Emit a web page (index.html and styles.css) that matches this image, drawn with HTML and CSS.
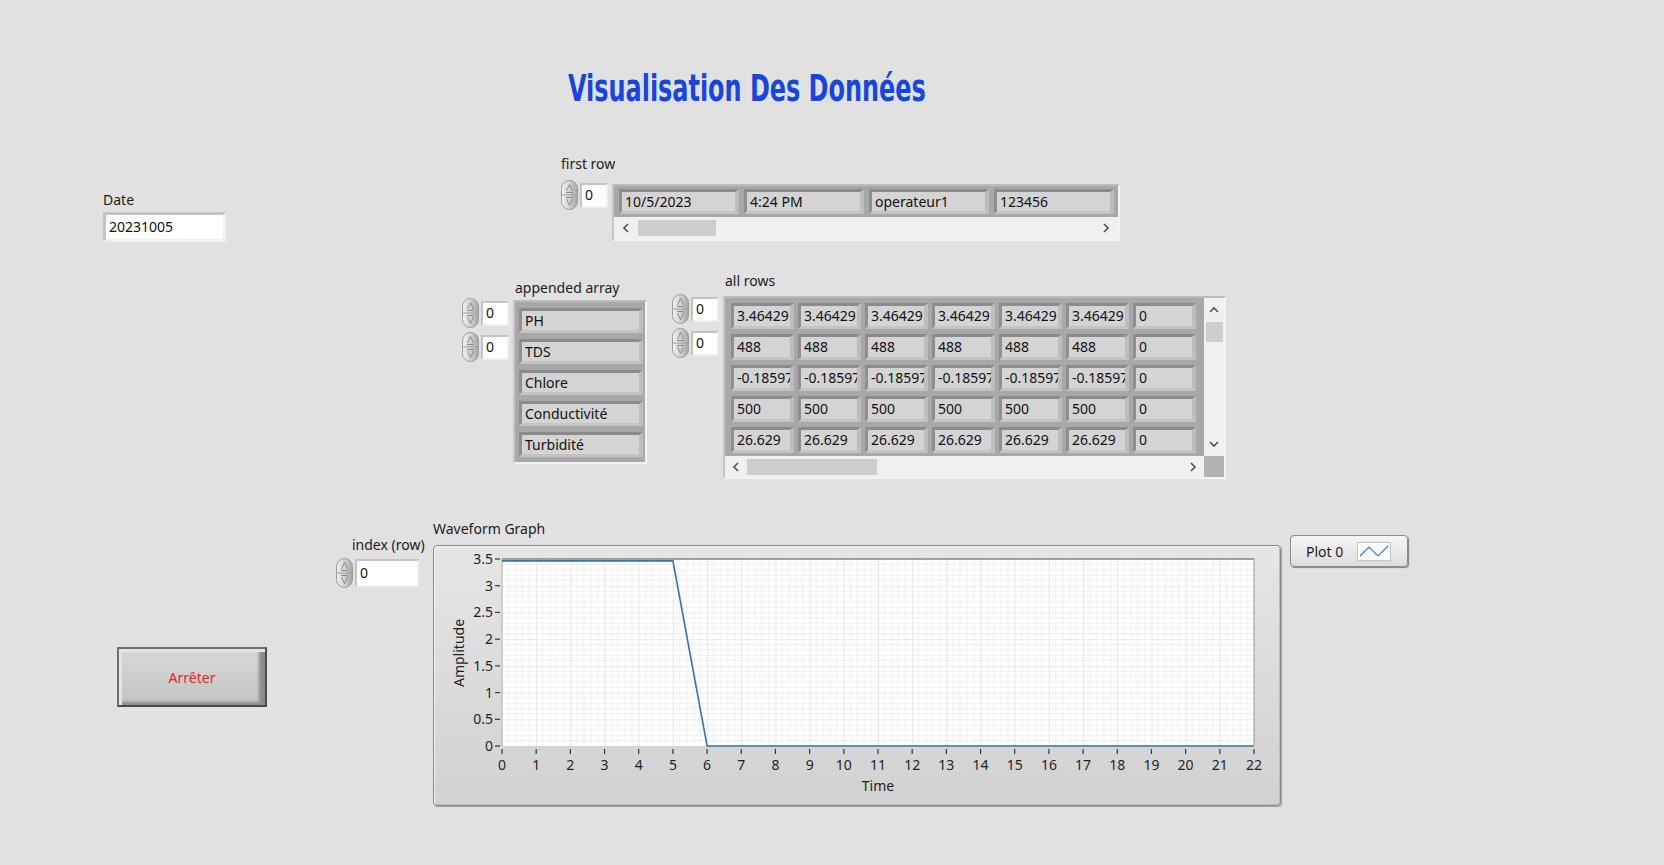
FILE: index.html
```html
<!DOCTYPE html>
<html lang="fr">
<head>
<meta charset="utf-8">
<title>Visualisation Des Données</title>
<link rel="stylesheet" href="styles.css">
</head>
<body>
<div class="panel">
  <h1 class="title"><span>Visualisation Des Données</span></h1>

  <!-- Date -->
  <div class="lbl lbl-date">Date</div>
  <div class="num date-box">20231005</div>

  <!-- first row -->
  <div class="lbl lbl-first">first row</div>
  <div class="idx idx-first">
    <svg class="spin" width="17" height="30" viewBox="0 0 17 30"><defs><linearGradient id="sg" x1="0" x2="1"><stop offset="0" stop-color="#f2f2f2"/><stop offset="0.5" stop-color="#d2d2d2"/><stop offset="1" stop-color="#a4a4a4"/></linearGradient></defs><rect x="0.5" y="0.5" width="16" height="29" rx="8" fill="url(#sg)" stroke="#9c9c9c"/><line x1="1" y1="15" x2="16" y2="15" stroke="#a0a0a0"/><path d="M8.5 4.5 L5.5 11 M8.5 4.5 L11.5 11 M5 12.5 H12" fill="none" stroke="#8a8a8a"/><path d="M8.5 25.5 L5.5 19 M8.5 25.5 L11.5 19 M5 17.5 H12" fill="none" stroke="#8a8a8a"/></svg>
    <div class="num idx-box">0</div>
  </div>
  <div class="frame arr1">
    <div class="cells1">
      <div class="cell">10/5/2023</div>
      <div class="cell">4:24 PM</div>
      <div class="cell">operateur1</div>
      <div class="cell">123456</div>
    </div>
    <div class="hscroll hs1">
      <div class="sb-btn"><svg width="8" height="10" viewBox="0 0 8 10"><path d="M6 1 L2 5 L6 9" fill="none" stroke="#505050" stroke-width="1.6"/></svg></div>
      <div class="thumb thumb1"></div>
      <div class="sb-fill"></div>
      <div class="sb-btn"><svg width="8" height="10" viewBox="0 0 8 10"><path d="M2 1 L6 5 L2 9" fill="none" stroke="#505050" stroke-width="1.6"/></svg></div>
    </div>
  </div>

  <!-- appended array -->
  <div class="lbl lbl-app">appended array</div>
  <div class="idxcol idx-app">
    <div class="idx">
      <svg class="spin" width="17" height="30" viewBox="0 0 17 30"><rect x="0.5" y="0.5" width="16" height="29" rx="8" fill="url(#sg)" stroke="#9c9c9c"/><line x1="1" y1="15" x2="16" y2="15" stroke="#a0a0a0"/><path d="M8.5 4.5 L5.5 11 M8.5 4.5 L11.5 11 M5 12.5 H12" fill="none" stroke="#8a8a8a"/><path d="M8.5 25.5 L5.5 19 M8.5 25.5 L11.5 19 M5 17.5 H12" fill="none" stroke="#8a8a8a"/></svg>
      <div class="num idx-box">0</div>
    </div>
    <div class="idx">
      <svg class="spin" width="17" height="30" viewBox="0 0 17 30"><rect x="0.5" y="0.5" width="16" height="29" rx="8" fill="url(#sg)" stroke="#9c9c9c"/><line x1="1" y1="15" x2="16" y2="15" stroke="#a0a0a0"/><path d="M8.5 4.5 L5.5 11 M8.5 4.5 L11.5 11 M5 12.5 H12" fill="none" stroke="#8a8a8a"/><path d="M8.5 25.5 L5.5 19 M8.5 25.5 L11.5 19 M5 17.5 H12" fill="none" stroke="#8a8a8a"/></svg>
      <div class="num idx-box">0</div>
    </div>
  </div>
  <div class="frame arr-app">
    <div class="cell">PH</div>
    <div class="cell">TDS</div>
    <div class="cell">Chlore</div>
    <div class="cell">Conductivité</div>
    <div class="cell">Turbidité</div>
  </div>

  <!-- all rows -->
  <div class="lbl lbl-all">all rows</div>
  <div class="idxcol idx-all">
    <div class="idx">
      <svg class="spin" width="17" height="30" viewBox="0 0 17 30"><rect x="0.5" y="0.5" width="16" height="29" rx="8" fill="url(#sg)" stroke="#9c9c9c"/><line x1="1" y1="15" x2="16" y2="15" stroke="#a0a0a0"/><path d="M8.5 4.5 L5.5 11 M8.5 4.5 L11.5 11 M5 12.5 H12" fill="none" stroke="#8a8a8a"/><path d="M8.5 25.5 L5.5 19 M8.5 25.5 L11.5 19 M5 17.5 H12" fill="none" stroke="#8a8a8a"/></svg>
      <div class="num idx-box">0</div>
    </div>
    <div class="idx">
      <svg class="spin" width="17" height="30" viewBox="0 0 17 30"><rect x="0.5" y="0.5" width="16" height="29" rx="8" fill="url(#sg)" stroke="#9c9c9c"/><line x1="1" y1="15" x2="16" y2="15" stroke="#a0a0a0"/><path d="M8.5 4.5 L5.5 11 M8.5 4.5 L11.5 11 M5 12.5 H12" fill="none" stroke="#8a8a8a"/><path d="M8.5 25.5 L5.5 19 M8.5 25.5 L11.5 19 M5 17.5 H12" fill="none" stroke="#8a8a8a"/></svg>
      <div class="num idx-box">0</div>
    </div>
  </div>
  <div class="frame arr2">
    <div class="cells2">
      <div class="cell">3.46429</div><div class="cell">3.46429</div><div class="cell">3.46429</div><div class="cell">3.46429</div><div class="cell">3.46429</div><div class="cell">3.46429</div><div class="cell">0</div>
      <div class="cell">488</div><div class="cell">488</div><div class="cell">488</div><div class="cell">488</div><div class="cell">488</div><div class="cell">488</div><div class="cell">0</div>
      <div class="cell">-0.18597</div><div class="cell">-0.18597</div><div class="cell">-0.18597</div><div class="cell">-0.18597</div><div class="cell">-0.18597</div><div class="cell">-0.18597</div><div class="cell">0</div>
      <div class="cell">500</div><div class="cell">500</div><div class="cell">500</div><div class="cell">500</div><div class="cell">500</div><div class="cell">500</div><div class="cell">0</div>
      <div class="cell">26.629</div><div class="cell">26.629</div><div class="cell">26.629</div><div class="cell">26.629</div><div class="cell">26.629</div><div class="cell">26.629</div><div class="cell">0</div>
    </div>
    <div class="vscroll">
      <div class="sb-btn-v"><svg width="10" height="8" viewBox="0 0 10 8"><path d="M1 6 L5 2 L9 6" fill="none" stroke="#505050" stroke-width="1.6"/></svg></div>
      <div class="thumb thumb-v"></div>
      <div class="sb-fill"></div>
      <div class="sb-btn-v"><svg width="10" height="8" viewBox="0 0 10 8"><path d="M1 2 L5 6 L9 2" fill="none" stroke="#505050" stroke-width="1.6"/></svg></div>
    </div>
    <div class="hscroll hs2">
      <div class="sb-btn"><svg width="8" height="10" viewBox="0 0 8 10"><path d="M6 1 L2 5 L6 9" fill="none" stroke="#505050" stroke-width="1.6"/></svg></div>
      <div class="thumb thumb2"></div>
      <div class="sb-fill"></div>
      <div class="sb-btn"><svg width="8" height="10" viewBox="0 0 8 10"><path d="M2 1 L6 5 L2 9" fill="none" stroke="#505050" stroke-width="1.6"/></svg></div>
    </div>
    <div class="corner"></div>
  </div>

  <!-- index (row) -->
  <div class="lbl lbl-index">index (row)</div>
  <div class="idx idx-row">
    <svg class="spin" width="17" height="30" viewBox="0 0 17 30"><rect x="0.5" y="0.5" width="16" height="29" rx="8" fill="url(#sg)" stroke="#9c9c9c"/><line x1="1" y1="15" x2="16" y2="15" stroke="#a0a0a0"/><path d="M8.5 4.5 L5.5 11 M8.5 4.5 L11.5 11 M5 12.5 H12" fill="none" stroke="#8a8a8a"/><path d="M8.5 25.5 L5.5 19 M8.5 25.5 L11.5 19 M5 17.5 H12" fill="none" stroke="#8a8a8a"/></svg>
    <div class="num row-box">0</div>
  </div>

  <!-- Waveform graph -->
  <div class="lbl lbl-graph">Waveform Graph</div>
  <div class="graph">
    <svg width="846" height="259" viewBox="0 0 846 259" class="chart">
      <defs>
        <pattern id="grid" x="68" y="13" width="34.182" height="26.714" patternUnits="userSpaceOnUse">
          <g stroke="#efefef" stroke-width="1">
            <line x1="6.836" y1="0" x2="6.836" y2="26.714"/>
            <line x1="13.673" y1="0" x2="13.673" y2="26.714"/>
            <line x1="20.509" y1="0" x2="20.509" y2="26.714"/>
            <line x1="27.345" y1="0" x2="27.345" y2="26.714"/>
            <line x1="0" y1="5.343" x2="34.182" y2="5.343"/>
            <line x1="0" y1="10.686" x2="34.182" y2="10.686"/>
            <line x1="0" y1="16.028" x2="34.182" y2="16.028"/>
            <line x1="0" y1="21.371" x2="34.182" y2="21.371"/>
          </g>
          <g stroke="#d9d9d9" stroke-width="1.2">
            <line x1="0" y1="0" x2="0" y2="26.714"/>
            <line x1="0" y1="0" x2="34.182" y2="0"/>
          </g>
        </pattern>
      </defs>
      <rect x="68" y="13" width="752" height="187" fill="#ffffff"/>
      <rect x="68" y="13" width="752" height="187" fill="url(#grid)"/>
      <line x1="68" y1="13" x2="820" y2="13" stroke="#555555" stroke-width="1"/>
      <line x1="820" y1="13" x2="820" y2="200" stroke="#9a9a9a" stroke-width="1"/>
      <line x1="68" y1="13" x2="68" y2="200" stroke="#b5b5b5" stroke-width="1"/>
      <polyline points="68,14.9 238.91,14.9 273.09,200 820,200" fill="none" stroke="#3572b5" stroke-width="1.6"/>
      <g stroke="#333333" stroke-width="1.2">
        <line x1="61" y1="13" x2="66" y2="13"/>
        <line x1="61" y1="39.71" x2="66" y2="39.71"/>
        <line x1="61" y1="66.43" x2="66" y2="66.43"/>
        <line x1="61" y1="93.14" x2="66" y2="93.14"/>
        <line x1="61" y1="119.86" x2="66" y2="119.86"/>
        <line x1="61" y1="146.57" x2="66" y2="146.57"/>
        <line x1="61" y1="173.29" x2="66" y2="173.29"/>
        <line x1="61" y1="200" x2="66" y2="200"/>
        <line x1="68" y1="203" x2="68" y2="208"/>
        <line x1="102.18" y1="203" x2="102.18" y2="208"/>
        <line x1="136.36" y1="203" x2="136.36" y2="208"/>
        <line x1="170.55" y1="203" x2="170.55" y2="208"/>
        <line x1="204.73" y1="203" x2="204.73" y2="208"/>
        <line x1="238.91" y1="203" x2="238.91" y2="208"/>
        <line x1="273.09" y1="203" x2="273.09" y2="208"/>
        <line x1="307.27" y1="203" x2="307.27" y2="208"/>
        <line x1="341.45" y1="203" x2="341.45" y2="208"/>
        <line x1="375.64" y1="203" x2="375.64" y2="208"/>
        <line x1="409.82" y1="203" x2="409.82" y2="208"/>
        <line x1="444" y1="203" x2="444" y2="208"/>
        <line x1="478.18" y1="203" x2="478.18" y2="208"/>
        <line x1="512.36" y1="203" x2="512.36" y2="208"/>
        <line x1="546.55" y1="203" x2="546.55" y2="208"/>
        <line x1="580.73" y1="203" x2="580.73" y2="208"/>
        <line x1="614.91" y1="203" x2="614.91" y2="208"/>
        <line x1="649.09" y1="203" x2="649.09" y2="208"/>
        <line x1="683.27" y1="203" x2="683.27" y2="208"/>
        <line x1="717.45" y1="203" x2="717.45" y2="208"/>
        <line x1="751.64" y1="203" x2="751.64" y2="208"/>
        <line x1="785.82" y1="203" x2="785.82" y2="208"/>
        <line x1="820" y1="203" x2="820" y2="208"/>
      </g>
      <g class="ylab" text-anchor="end">
        <text x="59" y="18">3.5</text>
        <text x="59" y="44.7">3</text>
        <text x="59" y="71.4">2.5</text>
        <text x="59" y="98.1">2</text>
        <text x="59" y="124.9">1.5</text>
        <text x="59" y="151.6">1</text>
        <text x="59" y="178.3">0.5</text>
        <text x="59" y="205">0</text>
      </g>
      <g class="xlab" text-anchor="middle">
        <text x="68" y="224">0</text>
        <text x="102.18" y="224">1</text>
        <text x="136.36" y="224">2</text>
        <text x="170.55" y="224">3</text>
        <text x="204.73" y="224">4</text>
        <text x="238.91" y="224">5</text>
        <text x="273.09" y="224">6</text>
        <text x="307.27" y="224">7</text>
        <text x="341.45" y="224">8</text>
        <text x="375.64" y="224">9</text>
        <text x="409.82" y="224">10</text>
        <text x="444" y="224">11</text>
        <text x="478.18" y="224">12</text>
        <text x="512.36" y="224">13</text>
        <text x="546.55" y="224">14</text>
        <text x="580.73" y="224">15</text>
        <text x="614.91" y="224">16</text>
        <text x="649.09" y="224">17</text>
        <text x="683.27" y="224">18</text>
        <text x="717.45" y="224">19</text>
        <text x="751.64" y="224">20</text>
        <text x="785.82" y="224">21</text>
        <text x="820" y="224">22</text>
      </g>
      <text class="axis-name" x="444" y="245" text-anchor="middle">Time</text>
      <text class="axis-name" transform="translate(30,107) rotate(-90)" text-anchor="middle">Amplitude</text>
    </svg>
  </div>

  <!-- legend -->
  <div class="legend">
    <span class="legend-name">Plot 0</span>
    <svg class="swatch" width="34" height="19" viewBox="0 0 34 19"><rect x="0.5" y="0.5" width="33" height="18" fill="#ffffff" stroke="#c4c4c4"/><polyline points="3,14 12,5 21,14 31,4" fill="none" stroke="#3a7ac4" stroke-width="1.2"/></svg>
  </div>

  <!-- stop button -->
  <div class="stop-btn">Arrêter</div>
</div>
</body>
</html>
```

FILE: styles.css
```css
html, body {
  margin: 0;
  padding: 0;
}
body {
  background: #e1e1e1;
  font-family: "Noto Sans", "Open Sans", sans-serif;
  font-size: 14px;
  color: #1c1c1c;
}
.panel {
  position: relative;
  width: 1664px;
  height: 865px;
  overflow: hidden;
  background: #e1e1e1;
}

/* Title */
.title {
  position: absolute;
  left: 568px;
  top: 68px;
  margin: 0;
  font-family: "DejaVu Sans Condensed", "DejaVu Sans", sans-serif;
  font-weight: bold;
  font-size: 38px;
  line-height: 40px;
  color: #1745e3;
  white-space: nowrap;
}
.title span {
  display: inline-block;
  transform: scaleX(0.7);
  transform-origin: left center;
}

/* Labels */
.lbl {
  position: absolute;
  font-size: 14px;
  line-height: 18px;
  color: #1c1c1c;
  white-space: nowrap;
}
.lbl-date { left: 103px; top: 191px; }
.lbl-first { left: 561px; top: 155px; }
.lbl-app { left: 515px; top: 279px; }
.lbl-all { left: 725px; top: 272px; }
.lbl-index { left: 352px; top: 536px; }
.lbl-graph { left: 433px; top: 520px; }

/* Numeric boxes */
.num {
  box-sizing: border-box;
  background: #ffffff;
  border: 2px solid;
  border-color: #c3c3c3 #efefef #efefef #c3c3c3;
  font-size: 14px;
  padding-left: 3px;
  white-space: nowrap;
  overflow: hidden;
  color: #111;
}
.date-box {
  position: absolute;
  left: 103px;
  top: 212px;
  width: 123px;
  height: 30px;
  border-width: 3px;
  line-height: 23px;
}
.idx {
  display: flex;
  align-items: center;
  gap: 2px;
}
.spin { display: block; flex: none; }
.idx-box {
  width: 28px;
  height: 25px;
  line-height: 20px;
}
.row-box {
  width: 64px;
  height: 28px;
  line-height: 23px;
}
.idx-first { position: absolute; left: 561px; top: 180px; }
.idxcol {
  position: absolute;
  display: flex;
  flex-direction: column;
  gap: 4px;
}
.idx-app { left: 462px; top: 298px; }
.idx-all { left: 672px; top: 294px; }
.idx-row { position: absolute; left: 336px; top: 558px; }

/* Array frames */
.frame {
  position: absolute;
  box-sizing: border-box;
  border: 2px solid;
  border-color: #bcbcbc #f3f3f3 #f3f3f3 #c6c6c6;
  background: #a8a8a8;
}
.cell {
  box-sizing: border-box;
  background: #d4d4d4;
  border: 3px solid;
  border-right-width: 4px;
  border-color: #8b8b8b #bdbdbd #c4c4c4 #8f8f8f;
  font-size: 14px;
  line-height: 19px;
  padding-left: 3px;
  white-space: nowrap;
  overflow: hidden;
  color: #111;
}

.arr1 {
  left: 612px;
  top: 184px;
  width: 508px;
  height: 57px;
  display: flex;
  flex-direction: column;
}
.cells1 {
  display: grid;
  grid-template-columns: repeat(4, 120px);
  column-gap: 5px;
  padding: 3px 4px 3px 5px;
}
.cells1 .cell { height: 25px; }
.hscroll {
  display: flex;
  align-items: center;
  background: #f0f0f0;
}
.hs1 { flex: 1; }
.sb-btn {
  width: 24px;
  height: 100%;
  display: flex;
  align-items: center;
  justify-content: center;
  flex: none;
}
.sb-fill { flex: 1; }
.thumb { background: #cdcdcd; flex: none; }
.thumb1 { width: 78px; height: 16px; }

.arr-app {
  left: 513px;
  top: 300px;
  width: 134px;
  height: 164px;
  display: flex;
  flex-direction: column;
  gap: 6px;
  padding: 6px 2px 0 4px;
}
.arr-app .cell { height: 25px; width: 124px; }

.arr2 {
  left: 723px;
  top: 296px;
  width: 503px;
  height: 183px;
  display: grid;
  grid-template-columns: 1fr 20px;
  grid-template-rows: 1fr 21px;
}
.cells2 {
  display: grid;
  grid-template-columns: repeat(7, 63px);
  grid-auto-rows: 26px;
  column-gap: 4px;
  row-gap: 5px;
  padding: 5px 0 0 6px;
}
.vscroll {
  display: flex;
  flex-direction: column;
  align-items: center;
  background: #f0f0f0;
}
.sb-btn-v {
  height: 24px;
  width: 100%;
  display: flex;
  align-items: center;
  justify-content: center;
  flex: none;
}
.thumb-v { width: 17px; height: 20px; }
.hs2 .sb-btn { width: 22px; }
.thumb2 { width: 130px; height: 16px; }
.corner { background: #b3b3b3; }

/* Graph */
.graph {
  position: absolute;
  left: 433px;
  top: 545px;
  width: 848px;
  height: 261px;
  box-sizing: border-box;
  border: 1px solid #8a8a8a;
  border-radius: 4px;
  background: linear-gradient(#e6e6e6, #d1d1d1);
  box-shadow: inset 1px 1px 0 #f4f4f4, inset -1px -1px 0 #bdbdbd, 1px 1px 1px #a0a0a0;
}
.chart { display: block; }
.chart text {
  font-family: "Noto Sans", "Open Sans", sans-serif;
  font-size: 14px;
  fill: #1f1f1f;
}

/* Legend */
.legend {
  position: absolute;
  left: 1290px;
  top: 535px;
  width: 118px;
  height: 32px;
  box-sizing: border-box;
  border: 1px solid #8c8c8c;
  border-radius: 4px;
  background: linear-gradient(#f6f6f6, #dcdcdc);
  box-shadow: 1px 1px 1px #808080;
  display: flex;
  align-items: center;
  padding-left: 15px;
  gap: 14px;
}
.legend-name { font-size: 14px; color: #1c1c1c; }
.swatch { display: block; }

/* Stop button */
.stop-btn {
  position: absolute;
  left: 117px;
  top: 647px;
  width: 150px;
  height: 60px;
  box-sizing: border-box;
  border: 2px solid #4e4e4e;
  border-color: #6e6e6e #4a4a4a #4a4a4a #6e6e6e;
  background: linear-gradient(#d8d8d8, #c2c2c2);
  box-shadow: inset 3px 3px 0 #e4e4e4, inset -6px -3px 3px #8c8c8c;
  display: flex;
  align-items: center;
  justify-content: center;
  color: #f0202a;
  font-size: 14px;
}
```
